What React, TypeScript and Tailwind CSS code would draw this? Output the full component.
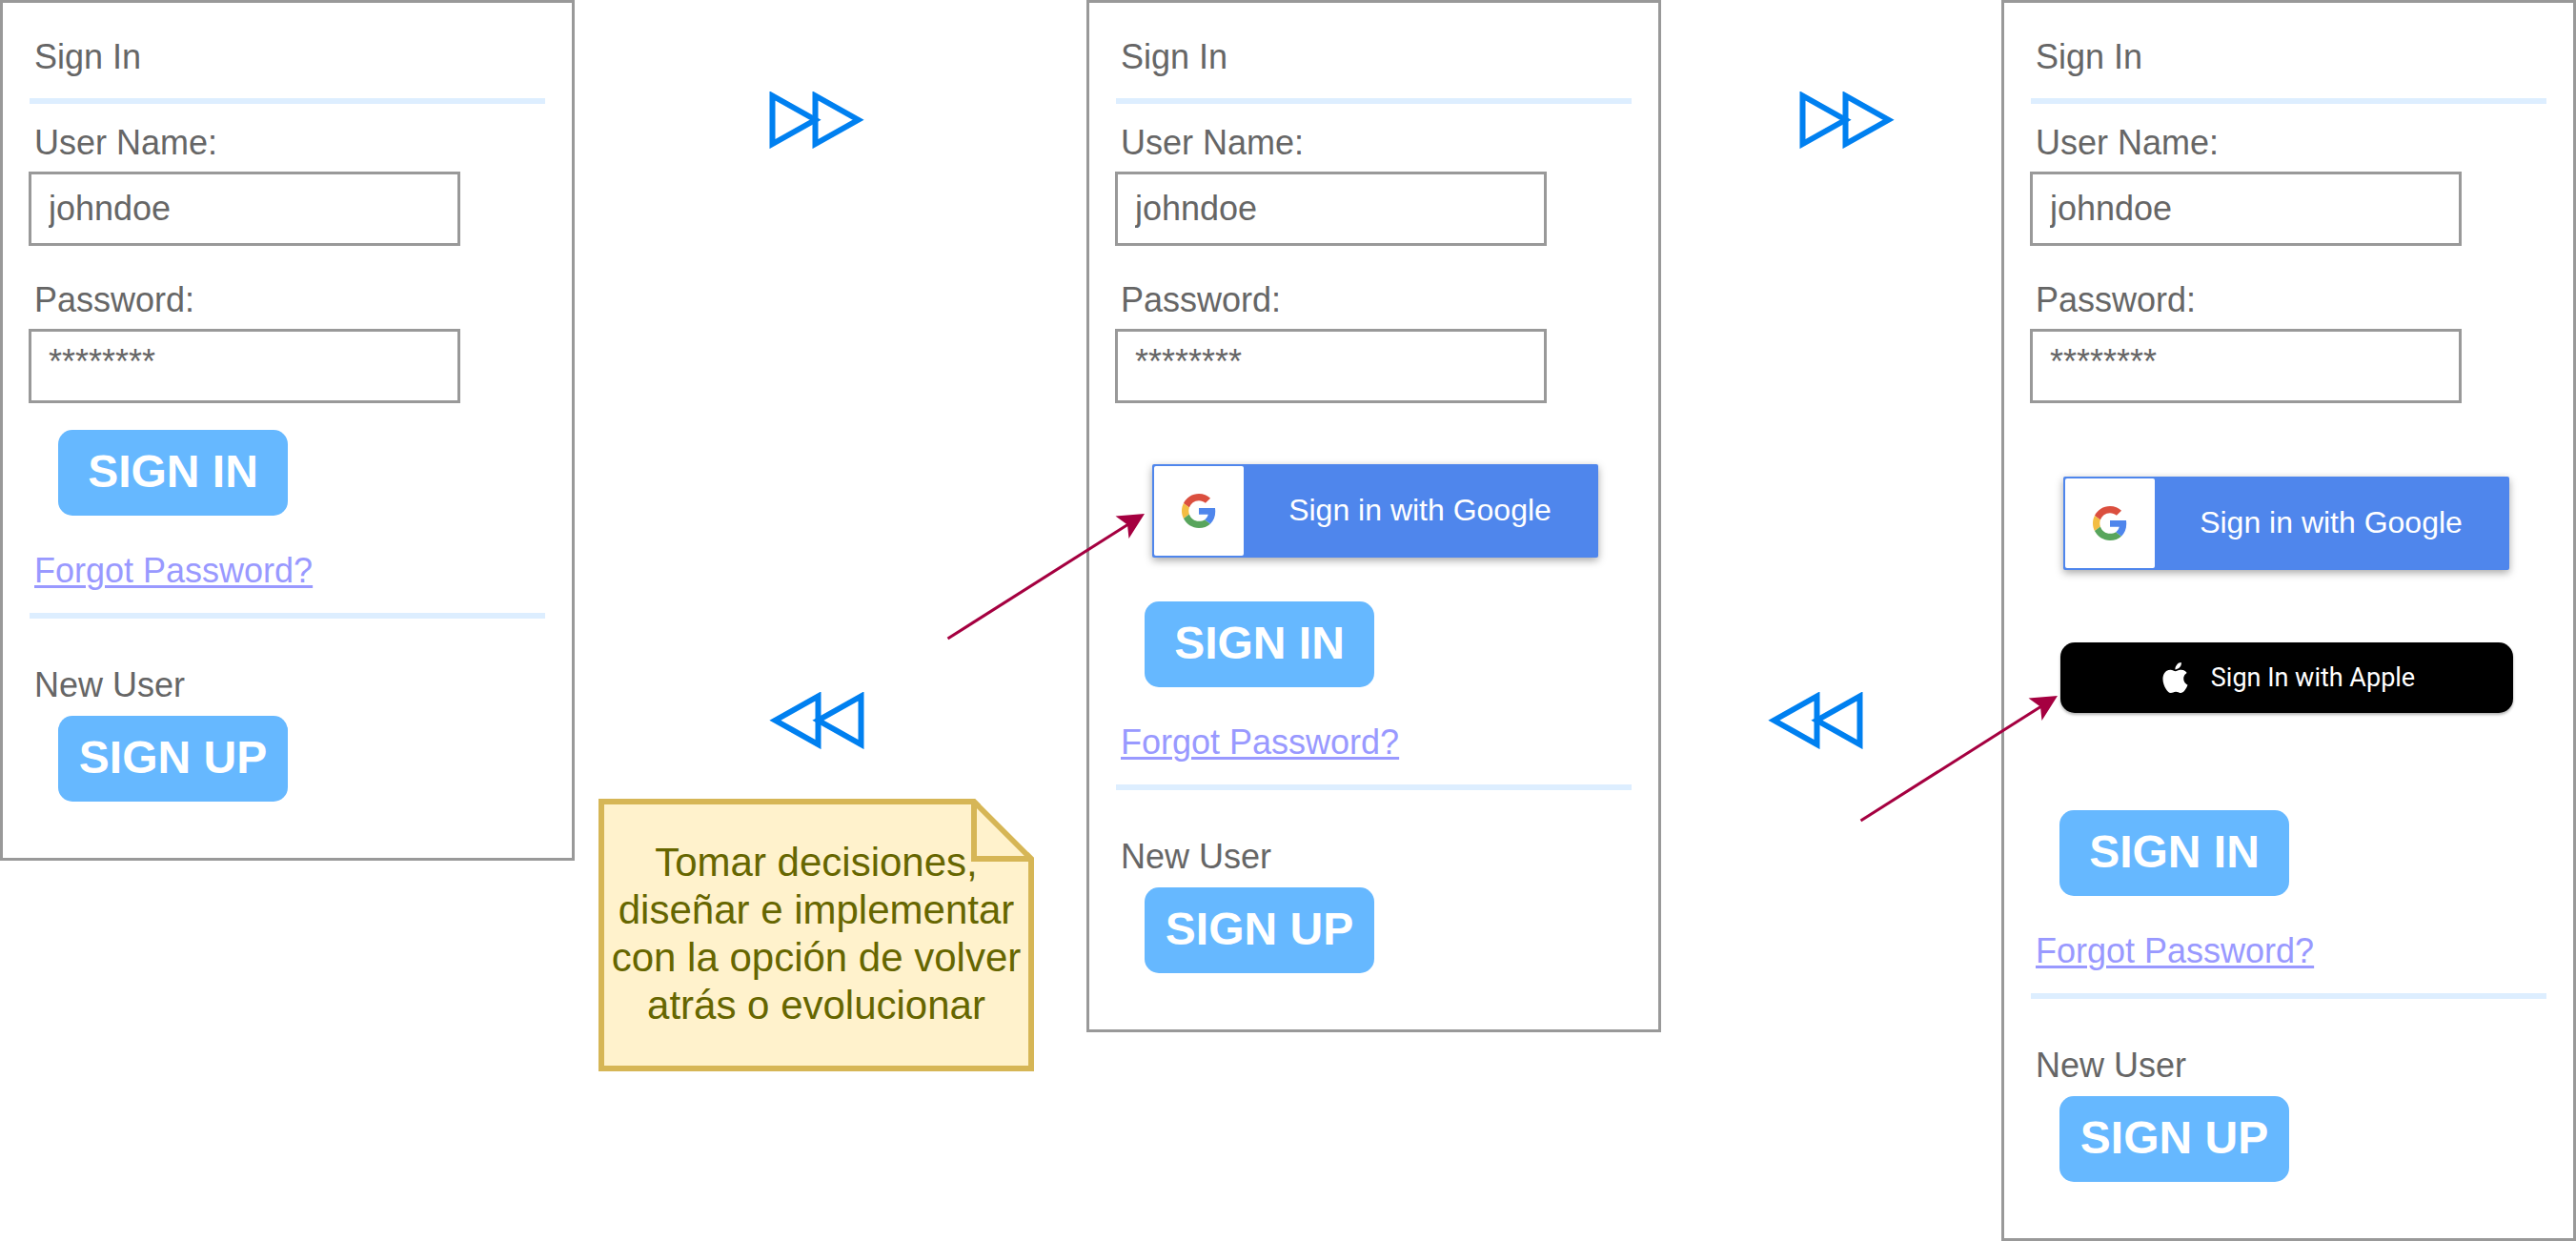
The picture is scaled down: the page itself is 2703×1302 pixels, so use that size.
import type { ReactNode } from "react";

function DoubleTriangle({ back = false }: { back?: boolean }) {
  return (
    <svg
      viewBox="0 0 100 60"
      className="h-[60px] w-[100px] shrink-0 fill-none stroke-[#0080f0]"
      strokeWidth="6"
      role="img"
      aria-label={back ? "Back" : "Forward"}
    >
      {back ? (
        <>
          <path d="M51.5 4.5V55L6.5 29.75Z" />
          <path d="M96.5 4.5V55L51.5 29.75Z" />
        </>
      ) : (
        <>
          <path d="M3.5 4.5V55L48.5 29.75Z" />
          <path d="M48.5 4.5V55L93.5 29.75Z" />
        </>
      )}
    </svg>
  );
}

function Pointer({ place }: { place: string }) {
  return (
    <svg
      viewBox="0 0 208 134"
      aria-hidden="true"
      className={"pointer-events-none absolute right-full h-[134px] w-[208px] " + place}
    >
      <path d="M1.5 132L191 12" className="stroke-[#a50040]" strokeWidth="3" />
      <path d="M208 1L191.5 27L190 12.500L177.500 3.500Z" className="fill-[#a50040]" />
    </svg>
  );
}

function GoogleMark() {
  return (
    <svg viewBox="0 0 48 48" className="h-9 w-9" aria-hidden="true">
      <path
        fill="#db4f3f"
        d="M24 9.5c3.54 0 6.71 1.22 9.21 3.6l6.85-6.85C35.9 2.380 30.470 0 24 0 14.620 0 6.510 5.380 2.560 13.220l7.980 6.190C12.430 13.720 17.740 9.500 24 9.500z"
      />
      <path
        fill="#4f86ec"
        d="M46.980 24.550c0-1.570-.15-3.090-.38-4.550H24v9.020h12.940c-.58 2.960-2.260 5.480-4.780 7.180l7.730 6c4.510-4.180 7.090-10.360 7.090-17.650z"
      />
      <path
        fill="#f3bd42"
        d="M10.530 28.590c-.48-1.450-.76-2.990-.76-4.590s.27-3.140.76-4.590l-7.980-6.190C.92 16.460 0 20.120 0 24c0 3.880.92 7.540 2.560 10.780l7.970-6.190z"
      />
      <path
        fill="#58a55c"
        d="M24 48c6.480 0 11.930-2.130 15.890-5.810l-7.730-6c-2.150 1.450-4.920 2.300-8.160 2.300-6.260 0-11.570-4.220-13.470-9.910l-7.980 6.190C6.510 42.620 14.620 48 24 48z"
      />
    </svg>
  );
}

function AppleMark() {
  return (
    <svg viewBox="2 0 20 24" className="h-8 w-[27px] fill-white" aria-hidden="true">
      <path d="M12.152 6.896c-.948 0-2.415-1.078-3.960-1.040-2.040.027-3.910 1.183-4.961 3.014-2.117 3.675-.546 9.103 1.519 12.090 1.013 1.454 2.208 3.090 3.792 3.039 1.520-.065 2.090-.987 3.935-.987 1.831 0 2.350.987 3.960.948 1.637-.026 2.676-1.480 3.676-2.948 1.156-1.688 1.636-3.325 1.662-3.415-.039-.013-3.182-1.221-3.220-4.857-.026-3.040 2.480-4.494 2.597-4.559-1.429-2.090-3.623-2.324-4.390-2.376-2-.156-3.675 1.090-4.610 1.090zM15.530 3.830c.843-1.012 1.400-2.427 1.245-3.830-1.207.052-2.662.805-3.532 1.818-.780.896-1.454 2.338-1.273 3.714 1.338.104 2.715-.688 3.559-1.701" />
    </svg>
  );
}

function GoogleButton() {
  return (
    <button
      type="button"
      className="flex h-[98px] w-[468px] max-w-full items-stretch rounded-[2px] bg-[#4f86ec] p-0.5 text-[32px] leading-9 text-white shadow-[0_3px_8px_rgba(0,0,0,0.35)]"
    >
      <span className="flex w-[94px] items-center justify-center rounded-[2px] bg-white">
        <GoogleMark />
      </span>
      <span className="flex flex-1 items-center justify-center pb-0.5">Sign in with Google</span>
    </button>
  );
}

function AppleButton() {
  return (
    <button
      type="button"
      className="flex h-[74px] w-[475px] max-w-full items-center justify-center gap-6 rounded-[15px] bg-black pl-1 font-[Roboto,sans-serif] text-[27px] text-white shadow-[0_2px_3px_rgba(0,0,0,0.3)]"
    >
      <AppleMark />
      <span>Sign In with Apple</span>
    </button>
  );
}

function ActionButton({ children }: { children: ReactNode }) {
  return (
    <button
      type="button"
      className="ml-[31px] block h-[90px] w-[241px] rounded-[15px] bg-[#66b8ff] pb-0.5 text-5xl font-bold text-white"
    >
      {children}
    </button>
  );
}

function Rule() {
  return <hr className="mx-px h-1.5 border-0 bg-[#ddeeff]" />;
}

function Field({
  id,
  label,
  value,
  inset = "",
}: {
  id: string;
  label: string;
  value: string;
  inset?: string;
}) {
  return (
    <div className="flex flex-col gap-[9px]">
      <label htmlFor={id} className="pl-1.5">
        {label}
      </label>
      <input
        id={id}
        type="text"
        defaultValue={value}
        className={
          "h-[78px] w-[453px] max-w-full border-[3px] border-[#999999] bg-white px-[18px] outline-none " + inset
        }
      />
    </div>
  );
}

function SignInCard({ name, children }: { name: string; children: ReactNode }) {
  return (
    <form className="border-[3px] border-[#999999] bg-white px-[27px] pt-9 pb-[59px] text-4xl leading-[42px] text-[#666666]">
      <h2 className="mb-[22px] pl-1.5">Sign In</h2>
      <Rule />
      <div className="mt-5 flex flex-col gap-9">
        <Field id={name + "-user"} label="User Name:" value="johndoe" />
        <Field id={name + "-password"} label="Password:" value="********" inset="pb-2" />
      </div>
      {children}
      <p className="mt-[37px] mb-[23px] pl-1.5">
        <a href="#forgot" className="text-[#9999ff] underline decoration-[3px] underline-offset-[3px]">
          Forgot Password?
        </a>
      </p>
      <Rule />
      <p className="mt-[49px] mb-[11px] pl-1.5">New User</p>
      <ActionButton>SIGN UP</ActionButton>
    </form>
  );
}

function Note() {
  return (
    <aside className="relative border-[6px] border-[#d6b656] bg-[#fff2cc] pt-[36px] pb-[38px] text-center text-[42px] leading-[50px] text-[#666600] [clip-path:polygon(0_0,calc(100%-62px)_0,100%_62px,100%_100%,0_100%)]">
      <svg
        viewBox="0 0 66 66"
        aria-hidden="true"
        className="absolute -top-1.5 -right-1.5 h-[66px] w-[66px] fill-[#fff2cc] stroke-[#d6b656]"
        strokeWidth="6"
      >
        <path d="M3 3V63H63Z" />
      </svg>
      <p className="relative">
        Tomar decisiones,
        <br />
        diseñar e implementar
        <br />
        con la opción de volver
        <br />
        atrás o evolucionar
      </p>
    </aside>
  );
}

export default function App() {
  return (
    <main className="grid min-h-screen grid-cols-[603fr_537fr_603fr_357fr_603fr] items-start bg-white font-['Liberation_Sans',Arial,sans-serif]">
      <SignInCard name="basic">
        <div className="mt-7">
          <ActionButton>SIGN IN</ActionButton>
        </div>
      </SignInCard>

      <div className="flex flex-col pt-24 pr-[55px] pl-[25px]">
        <div className="flex flex-col items-center gap-[570px]">
          <DoubleTriangle />
          <DoubleTriangle back />
        </div>
        <div className="mt-[52px]">
          <Note />
        </div>
      </div>

      <SignInCard name="google">
        <div className="relative mt-16 mb-[46px] ml-[39px]">
          <Pointer place="top-[51px] mr-[8px]" />
          <GoogleButton />
        </div>
        <ActionButton>SIGN IN</ActionButton>
      </SignInCard>

      <div className="flex flex-col gap-[570px] px-28 pt-24">
        <div className="flex justify-end">
          <DoubleTriangle />
        </div>
        <DoubleTriangle back />
      </div>

      <SignInCard name="apple">
        <div className="mt-[77px] ml-[35px]">
          <GoogleButton />
        </div>
        <div className="relative mt-[76px] mb-[102px] ml-8">
          <Pointer place="top-[55px] mr-[3px]" />
          <AppleButton />
        </div>
        <ActionButton>SIGN IN</ActionButton>
      </SignInCard>
    </main>
  );
}
